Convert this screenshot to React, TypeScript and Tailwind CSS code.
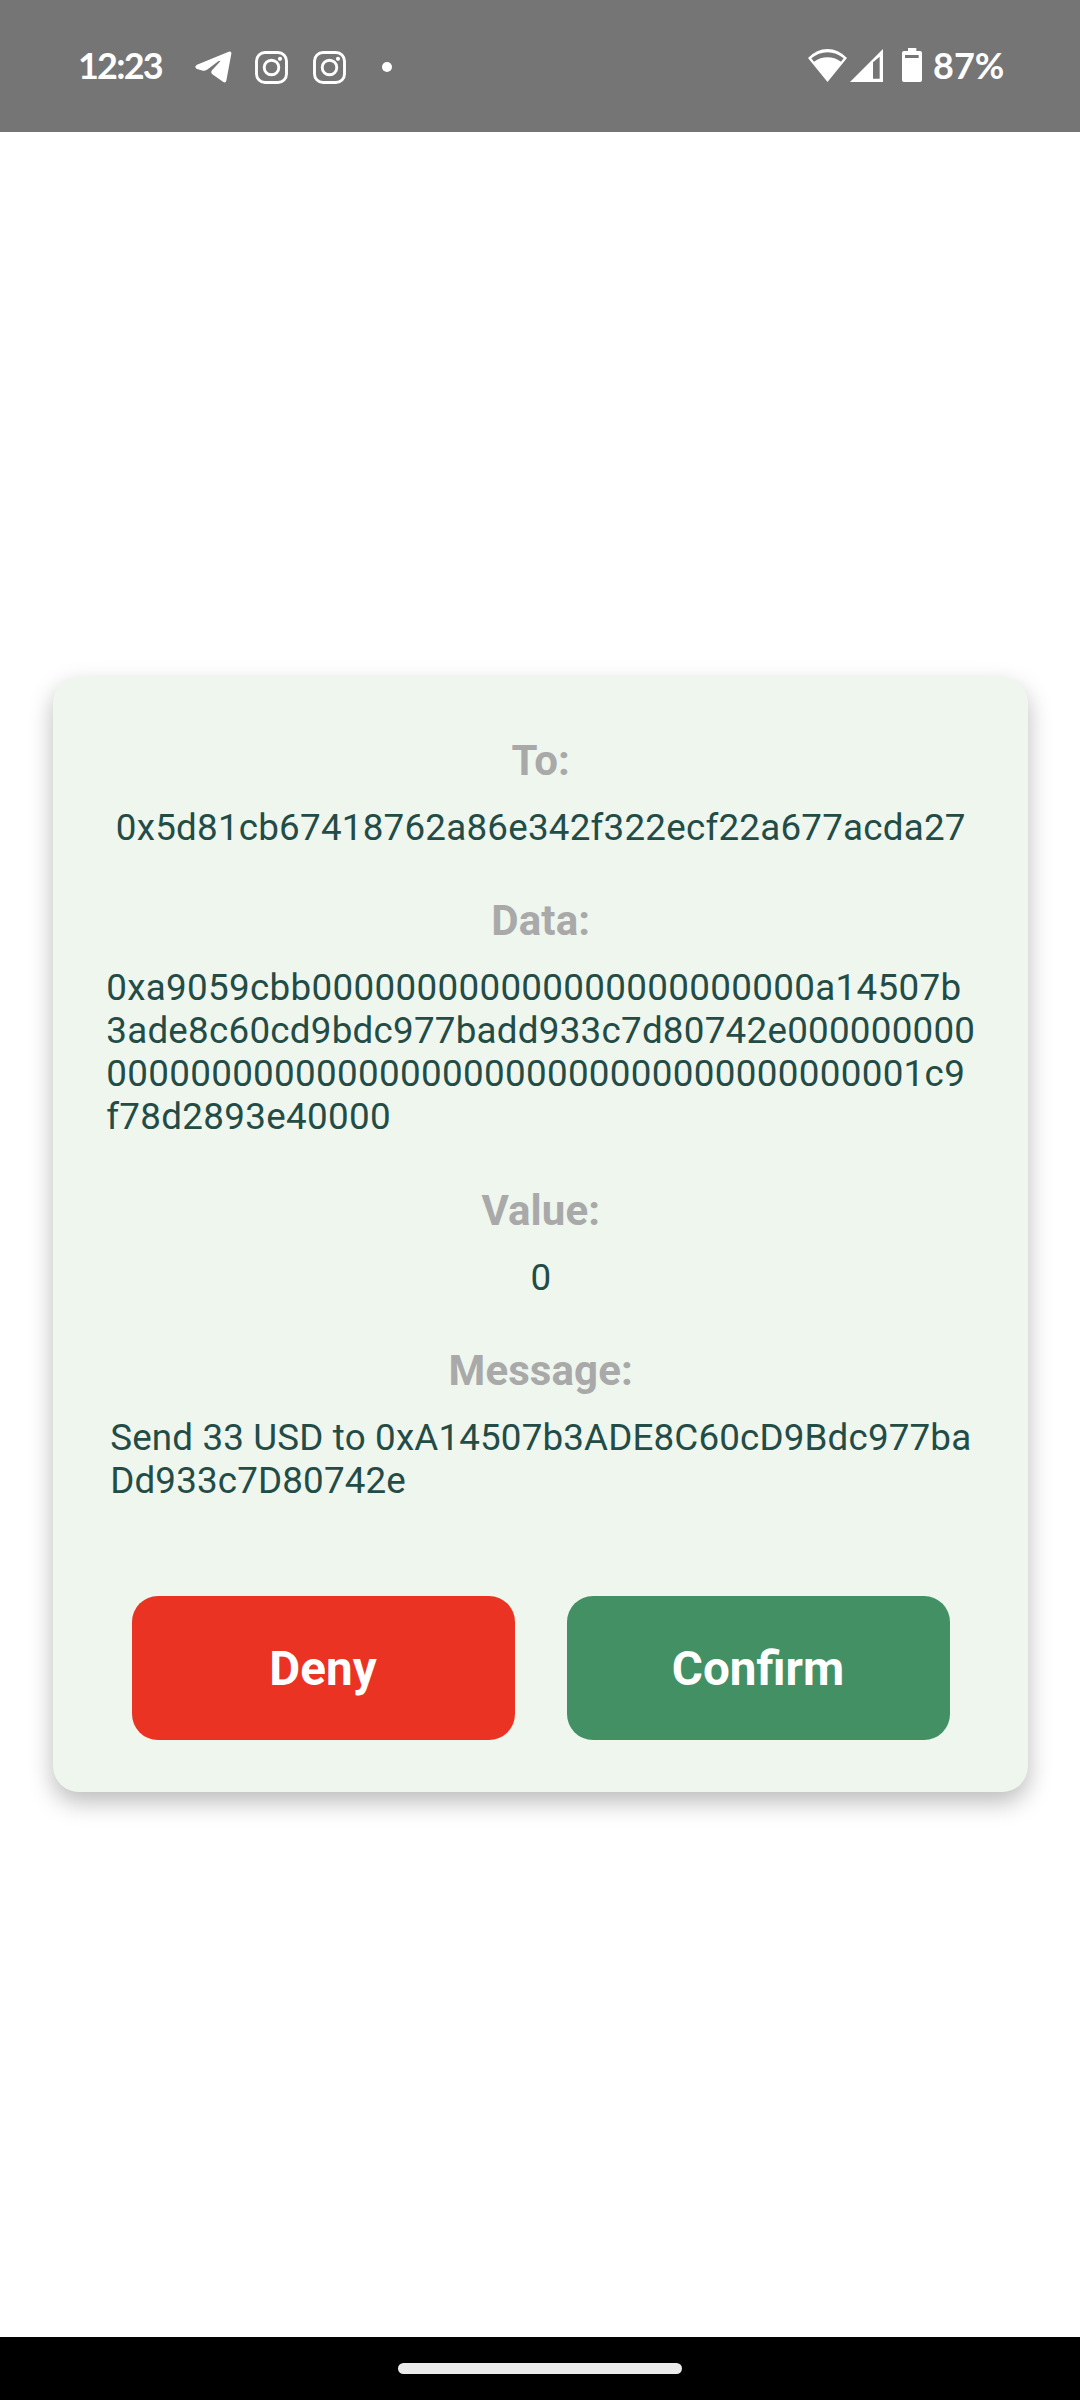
import type { ReactNode } from "react";

function TelegramIcon() {
  return (
    <svg className="h-8 w-[37px]" viewBox="404 67 111 96" fill="white">
      <path d="M406 112 Q403 117 410 121 L428 126 Q434 127 440 123 L474 98 Q484 93 478 100 L455 125 Q450 131 456 137 L489 160 Q496 164 498 156 L513 75 Q514 66 505 69 L410 108 Q407 110 406 112Z" />
    </svg>
  );
}

function InstagramIcon() {
  return (
    <svg className="size-[33px]" viewBox="0 0 33 33" fill="none" stroke="white">
      <rect x="1.5" y="1.5" width="30" height="30" rx="8.5" strokeWidth="2.9" />
      <circle cx="16.5" cy="16.5" r="7.3" strokeWidth="2.9" />
      <circle cx="25" cy="7.8" r="2.1" fill="white" stroke="none" />
    </svg>
  );
}

function WifiIcon() {
  return (
    <svg className="h-[33px] w-[39px]" viewBox="84 57 117 99" fill="white">
      <path
        fillRule="evenodd"
        d="M142.5 156 L84 84 Q110 57 142.5 57 Q175 57 201 84 Z M94 85 L102 95 Q121 82 142.5 82 Q164 82 183 95 L191 85 Q169 67 142.5 67 Q116 67 94 85Z"
      />
    </svg>
  );
}

function SignalIcon() {
  return (
    <svg className="h-[33px] w-[33px]" viewBox="210 57 99 99" fill="white">
      <path fillRule="evenodd" d="M210 156 L309 57 V156Z M279 97 V146 H299 V80Z" />
    </svg>
  );
}

function BatteryIcon() {
  return (
    <svg className="h-[34px] w-5" viewBox="366 54 60 102" fill="white">
      <path
        fillRule="evenodd"
        d="M384 54 H409 V63 H420 Q426 63 426 69 V150 Q426 156 420 156 H372 Q366 156 366 150 V69 Q366 63 372 63 H384Z M375 75 V84 H416 V75Z"
      />
    </svg>
  );
}

function StatusBar() {
  return (
    <header className="flex h-[132px] shrink-0 items-start bg-[#757575] pl-[79px] pr-[75px] pt-[48px] font-['Lato'] text-[36px] font-bold leading-[35px] text-white">
      <span className="-ml-px w-[117px] tracking-[-1.8px]">12:23</span>
      <div className="flex pt-[3px]">
        <TelegramIcon />
        <div className="ml-[23px]"><InstagramIcon /></div>
        <div className="ml-[25px]"><InstagramIcon /></div>
        <div className="ml-[36px] mt-[11px] size-2.5 rounded-full bg-white" />
      </div>
      <div className="ml-auto flex">
        <div className="pt-px"><WifiIcon /></div>
        <div className="ml-[3px] pt-px"><SignalIcon /></div>
        <div className="ml-[19px]"><BatteryIcon /></div>
        <span className="ml-[11px] w-[72px] whitespace-nowrap">87%</span>
      </div>
    </header>
  );
}

function Field({ label, children, className = "" }: { label: string; children: ReactNode; className?: string }) {
  return (
    <section className={`flex flex-col items-center gap-[21px] pl-[1.5px] ${className}`}>
      <h2 className="text-[42px] font-bold leading-[49px] tracking-[0.1px] text-[#a9a9a9]">{label}</h2>
      <div className="whitespace-pre text-[36.75px] leading-[43px] text-[#244c46]">{children}</div>
    </section>
  );
}

export default function App() {
  return (
    <div className="flex h-[2400px] w-[1080px] flex-col overflow-hidden bg-white font-['Roboto',sans-serif]">
      <StatusBar />
      <main className="flex flex-1 flex-col pt-[544.5px]">
        <div className="mx-[52.5px] h-[1115px] rounded-[26px] bg-[#eef6ee] pt-[59.5px] shadow-[0_10px_24px_rgba(0,0,0,0.27)]">
          <Field label="To:">
            <p className="tracking-[0.23px]">0x5d81cb67418762a86e342f322ecf22a677acda27</p>
          </Field>
          <Field label="Data:" className="mt-[47px]">
            <p className="tracking-[0.33px]">0xa9059cbb000000000000000000000000a14507b</p>
            <p className="tracking-[0.25px]">3ade8c60cd9bdc977badd933c7d80742e000000000</p>
            <p className="tracking-[0.33px]">000000000000000000000000000000000000001c9</p>
            <p className="tracking-[0.33px]">f78d2893e40000</p>
          </Field>
          <Field label="Value:" className="mt-12">0</Field>
          <Field label="Message:" className="mt-[47px]">
            <p className="tracking-[0.16px]">{"Send 33 USD to 0xA14507b3ADE8C60cD9Bdc977ba\nDd933c7D80742e"}</p>
          </Field>
          <div className="mt-[94px] flex justify-center gap-[52px] pl-px text-[47.6px] font-bold text-white">
            <button className="h-[144px] w-[383px] rounded-[26px] bg-[#ea3323] pt-[4px]">Deny</button>
            <button className="h-[144px] w-[383px] rounded-[26px] bg-[#449065] pt-[4px]">Confirm</button>
          </div>
        </div>
      </main>
      <footer className="flex h-[63px] shrink-0 justify-center bg-black pt-[26px]">
        <div className="h-[11px] w-[284px] rounded-full bg-[#ebebeb]" />
      </footer>
    </div>
  );
}
